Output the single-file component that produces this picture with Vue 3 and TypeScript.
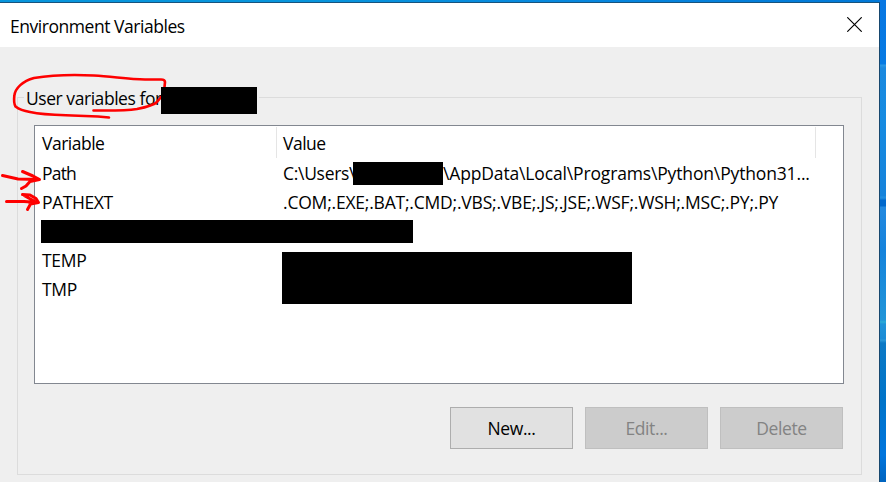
<script setup lang="ts">
interface Row {
  name: string
  value?: string
  masked?: boolean
}

const rows: Row[] = [
  { name: 'Path', masked: true },
  { name: 'PATHEXT', value: '.COM;.EXE;.BAT;.CMD;.VBS;.VBE;.JS;.JSE;.WSF;.WSH;.MSC;.PY;.PY' },
  { name: '' },
  { name: 'TEMP' },
  { name: 'TMP' },
]
</script>

<template>
  <div class="desktop">
    <section class="window">
      <header class="titlebar">
        <h1 class="title">Environment Variables</h1>
        <svg class="close" width="15" height="15" viewBox="0 0 15 15" aria-label="Close">
          <path d="M0.3 0.3 L14.7 14.7 M14.7 0.3 L0.3 14.7" stroke="#000" stroke-width="1.15" fill="none" />
        </svg>
      </header>
      <main class="body">
        <div class="group">
          <div class="legend">
            <span class="legend-text">User variables for</span>
            <span class="mask legend-mask"></span>
          </div>
          <div class="list">
            <div class="head">
              <div class="cell name head-name">Variable</div>
              <div class="cell head-value">Value</div>
            </div>
            <div v-for="(row, i) in rows" :key="i" class="row">
              <div class="cell name" :class="'name-' + row.name.toLowerCase()">{{ row.name }}</div>
              <div class="cell value">
                <template v-if="row.masked">
                  <span class="prefix">C:\Users\</span>
                  <span class="mask path-mask"></span>
                  <span class="suffix">\AppData\Local\Programs\Python\Python31...</span>
                </template>
                <span v-else class="ext">{{ row.value }}</span>
              </div>
            </div>
            <span class="mask row-mask"></span>
            <span class="mask temp-mask"></span>
          </div>
          <div class="actions">
            <button class="btn">New...</button>
            <button class="btn" disabled>Edit...</button>
            <button class="btn" disabled>Delete</button>
          </div>
        </div>
      </main>
    </section>
    <svg class="marks" width="180" height="220" viewBox="0 0 180 220">
      <g fill="none" stroke="#fe0000" stroke-width="2.6" stroke-linecap="round" stroke-linejoin="round">
        <path d="M164.500 87 L165 82 Q165 79.500 161 79.500 L145 79.500 C128 79 112 76.500 94 75.500 C74 74.500 52 75 34 78 C23 81 15 88 14.300 96 Q13.500 103 15.500 106.500 C20 110 24 111 30 112 C44 115 58 115 72 115.500 L98 116.500 L109 117.500" />
        <path d="M93.500 110.500 C108 110.500 124 111 137 109 C147 107 154 105 157 102 L161 97" />
        <path stroke-width="3" d="M2.500 175.500 L18 179 L39.500 179.500 M22.500 171.500 L33 176 L39.500 179.500 L30 181.500 L26 186 L21.500 188.500" />
        <path stroke-width="3" d="M6.500 201.500 L24 201.500 L38.500 202.500 M22.500 194.500 L30 195 L36 198.500 L38.500 202.500 L30.500 204 L27.500 209.500 M24 195.500 L34 201 L30 204" />
      </g>
    </svg>
  </div>
</template>

<style>
body {
  margin: 0;
  overflow: hidden;
}
</style>

<style scoped>
.desktop {
  position: relative;
  box-sizing: border-box;
  width: 886px;
  height: 482px;
  padding-top: 2px;
  overflow: hidden;
  font-family: "Open Sans", "Noto Sans", sans-serif;
  font-size: 17.5px;
  color: #000;
  background:
    linear-gradient(90deg, #0795dc 0, #0795dc 300px, #0686de 600px, #0078d7 879px) 0 0 / 879px 3px no-repeat,
    linear-gradient(180deg, #0877e2 0, #067ae3 64px, #2b98e5 65px, #1b89df 68px, #168be1 120px, #1683db 196px, #2390e0 197px, #1682d9 199px, #0068cc 200px, #0068cc 206px, #2389df 207px, #1583dc 250px, #2195d8 320px, #2bacd6 322px, #1f93d8 324px, #1b8bd6 339px, #2b99d9 340px, #0c79c5 343px, #0074c9 400px, #0075dd 455px, #0064bf 482px);
}
.window {
  box-sizing: border-box;
  display: flex;
  flex-direction: column;
  width: 880px;
  height: 480px;
  border-top: 1px solid #17537d;
  border-right: 1px solid #17486f;
  background: #efefef;
}
.titlebar {
  box-sizing: border-box;
  display: flex;
  align-items: center;
  justify-content: space-between;
  height: 44px;
  flex: none;
  padding: 0 17px 2px 10px;
  background: #fff;
}
.title {
  margin: 0;
  font-size: 17.5px;
  font-weight: 400;
  line-height: 24px;
  padding-top: 4px;
  letter-spacing: -0.46px;
  white-space: nowrap;
}
.body {
  padding: 50px 0 0 17px;
}
.group {
  box-sizing: border-box;
  width: 845px;
  height: 378px;
  border: 1px solid #dcdcdc;
  padding: 0 17px 0 16px;
}
.legend {
  display: flex;
  align-items: center;
  box-sizing: border-box;
  width: 235px;
  height: 27px;
  margin: -11px 0 11px -10px;
  padding-left: 2px;
  background: #efefef;
}
.legend-text {
  width: 135px;
  line-height: 24px;
  margin-top: -5px;
  letter-spacing: -0.45px;
  white-space: nowrap;
}
.mask {
  flex: none;
  background: #000;
}
.legend-mask {
  position: relative;
  z-index: 2;
  width: 96px;
  height: 27px;
}
.list {
  position: relative;
  box-sizing: border-box;
  width: 810px;
  height: 259px;
  padding-top: 1px;
  border: 1px solid #828790;
  background: #fff;
}
.head,
.row {
  display: flex;
}
.head {
  height: 31px;
  margin-bottom: 1px;
  line-height: 33px;
  letter-spacing: -0.5px;
}
.row {
  height: 29px;
  line-height: 29px;
}
.cell {
  box-sizing: border-box;
  display: flex;
  white-space: nowrap;
}
.name {
  width: 242px;
  padding-left: 7px;
}
.head-name,
.head-value {
  border-right: 1px solid #e5e5e5;
}
.head-value {
  width: 539px;
  padding-left: 6px;
}
.name-path {
  letter-spacing: -0.8px;
}
.name-pathext {
  letter-spacing: -0.4px;
}
.name-temp,
.name-tmp {
  letter-spacing: -0.3px;
}
.value {
  align-items: center;
  padding-left: 6px;
}
.prefix {
  width: 70px;
  letter-spacing: -0.3px;
}
.path-mask {
  position: relative;
  width: 90px;
  height: 23px;
}
.suffix {
  letter-spacing: -0.15px;
}
.ext {
  letter-spacing: -0.21px;
}
.row-mask {
  position: absolute;
  left: 6px;
  top: 94px;
  width: 372px;
  height: 23px;
}
.temp-mask {
  position: absolute;
  left: 247px;
  top: 126px;
  width: 350px;
  height: 52px;
}
.actions {
  display: flex;
  justify-content: flex-end;
  gap: 12px;
  padding: 23px 1px 0 0;
}
.btn {
  box-sizing: border-box;
  width: 123px;
  height: 42px;
  padding: 0;
  border: 1px solid #adadad;
  border-radius: 0;
  background: #e1e1e1;
  color: #000;
  font: inherit;
  letter-spacing: -0.4px;
}
.btn:disabled {
  border-color: #bfbfbf;
  background: #ccc;
  color: #838383;
}
.marks {
  position: absolute;
  left: 0;
  top: 0;
  z-index: 1;
}
</style>
